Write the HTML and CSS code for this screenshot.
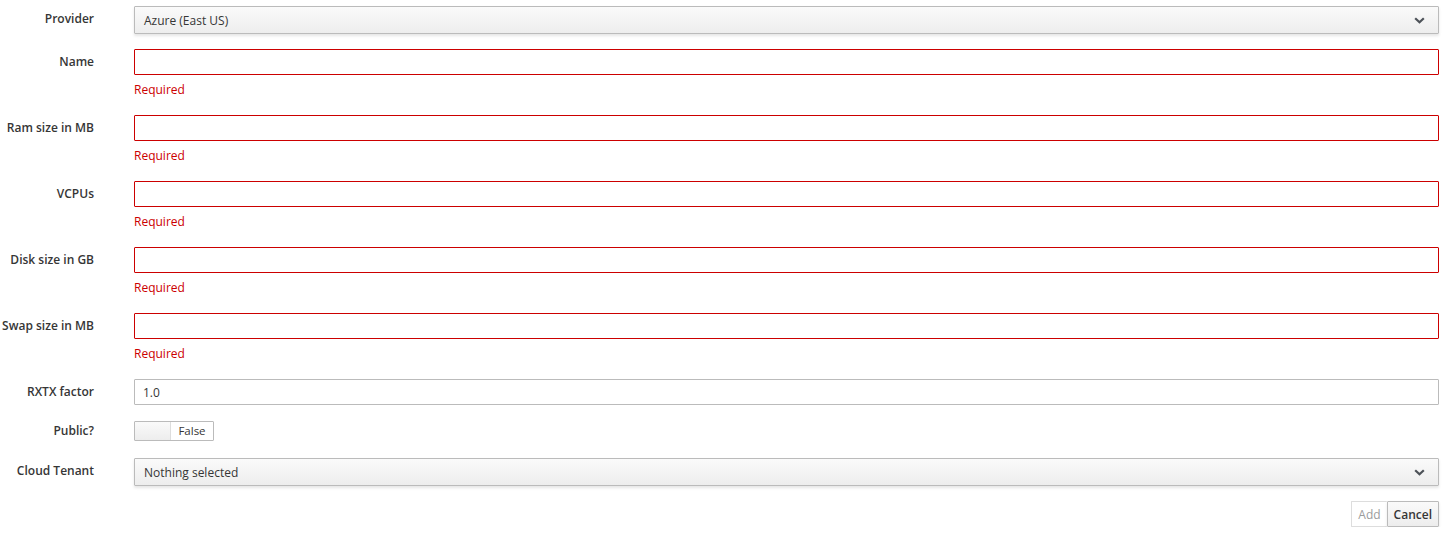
FILE: index.html
```html
<!DOCTYPE html>
<html lang="en">
<head>
  <meta charset="UTF-8" />
  <meta name="viewport" content="width=device-width, initial-scale=1" />
  <title>Add Flavor</title>
  <link rel="stylesheet" href="styles.css">
</head>
<body>
  <form class="flavor-form">
    <div class="row">
      <label class="row-label select-label">Provider</label>
      <div class="control">
        <button type="button" class="select-btn">
          <span>Azure (East US)</span>
          <svg class="chevron" width="11" height="7" viewBox="0 0 11 7"><path d="M1.2 1.2 L5.5 5.3 L9.8 1.2" fill="none" stroke="#4d5258" stroke-width="2.2"/></svg>
        </button>
      </div>
    </div>

    <div class="row">
      <label class="row-label">Name</label>
      <div class="control">
        <input class="text-input error" type="text" />
        <div class="help">Required</div>
      </div>
    </div>

    <div class="row">
      <label class="row-label">Ram size in MB</label>
      <div class="control">
        <input class="text-input error" type="text" />
        <div class="help">Required</div>
      </div>
    </div>

    <div class="row">
      <label class="row-label">VCPUs</label>
      <div class="control">
        <input class="text-input error" type="text" />
        <div class="help">Required</div>
      </div>
    </div>

    <div class="row">
      <label class="row-label">Disk size in GB</label>
      <div class="control">
        <input class="text-input error" type="text" />
        <div class="help">Required</div>
      </div>
    </div>

    <div class="row">
      <label class="row-label">Swap size in MB</label>
      <div class="control">
        <input class="text-input error" type="text" />
        <div class="help">Required</div>
      </div>
    </div>

    <div class="row">
      <label class="row-label">RXTX factor</label>
      <div class="control">
        <input class="text-input" type="text" value="1.0" />
      </div>
    </div>

    <div class="row row-switch">
      <label class="row-label switch-label">Public?</label>
      <div class="control">
        <div class="switch">
          <span class="switch-knob"></span>
          <span class="switch-off">False</span>
        </div>
      </div>
    </div>

    <div class="row">
      <label class="row-label select-label">Cloud Tenant</label>
      <div class="control">
        <button type="button" class="select-btn">
          <span>Nothing selected</span>
          <svg class="chevron" width="11" height="7" viewBox="0 0 11 7"><path d="M1.2 1.2 L5.5 5.3 L9.8 1.2" fill="none" stroke="#4d5258" stroke-width="2.2"/></svg>
        </button>
      </div>
    </div>

    <div class="actions">
      <button type="button" class="btn btn-disabled">Add</button>
      <button type="button" class="btn">Cancel</button>
    </div>
  </form>
</body>
</html>
```

FILE: styles.css
```css
body {
  margin: 0;
  background: #fff;
  font-family: "Open Sans", "Liberation Sans", Arial, sans-serif;
  font-size: 12px;
  color: #363636;
}

.flavor-form {
  padding: 6px 16px 0 0;
}

.row {
  display: grid;
  grid-template-columns: 94px 1fr;
  column-gap: 40px;
  margin-bottom: 15px;
}

.row-label {
  text-align: right;
  font-weight: 600;
  line-height: 18px;
  padding-top: 4px;
  white-space: nowrap;
}
.select-label { padding-top: 4px; }
.switch-label { padding-top: 1px; }

/* toggle row sits a little apart from its neighbours */
.row-switch {
  margin-top: 16px;
  margin-bottom: 17px;
}

.text-input {
  display: block;
  box-sizing: border-box;
  width: 100%;
  height: 26px;
  margin: 0;
  padding: 2px 8px;
  border: 1px solid #bbb;
  border-radius: 1px;
  font: inherit;
  color: #363636;
  background: #fff;
  outline: none;
}
.text-input.error {
  border-color: #c00;
}

.help {
  color: #c00;
  line-height: 20px;
  margin-top: 5px;
}

.select-btn {
  display: flex;
  align-items: center;
  justify-content: space-between;
  box-sizing: border-box;
  width: 100%;
  height: 28px;
  margin: 0;
  padding: 0 13px 0 9px;
  border: 1px solid #bbb;
  border-radius: 1px;
  background: linear-gradient(to bottom, #fafafa 0%, #ededed 100%);
  box-shadow: 0 2px 3px rgba(3,3,3,0.1);
  font: inherit;
  color: #363636;
  text-align: left;
  cursor: pointer;
}
.chevron { display: block; }

.switch {
  display: flex;
  box-sizing: border-box;
  width: 80px;
  height: 20px;
  border: 1px solid #bbb;
  border-radius: 1px;
  overflow: hidden;
}
.switch-knob {
  width: 35px;
  border-right: 1px solid #ddd;
  background: linear-gradient(to bottom, #fafafa 0%, #ededed 100%);
}
.switch-off {
  flex: 1;
  line-height: 18px;
  text-align: center;
  font-size: 11.5px;
  color: #363636;
  background: #fff;
}

.actions {
  display: flex;
  justify-content: flex-end;
}

.btn {
  box-sizing: border-box;
  height: 26px;
  margin: 0;
  padding: 0 6px;
  border: 1px solid #bbb;
  border-radius: 1px;
  background: linear-gradient(to bottom, #fafafa 0%, #ededed 100%);
  box-shadow: 0 2px 3px rgba(3,3,3,0.1);
  font: inherit;
  font-weight: 600;
  color: #363636;
  cursor: pointer;
}
.btn-disabled {
  background: #fff;
  border-color: #ddd;
  border-right: none;
  box-shadow: none;
  font-weight: 400;
  color: #9c9c9c;
  cursor: default;
}
```
